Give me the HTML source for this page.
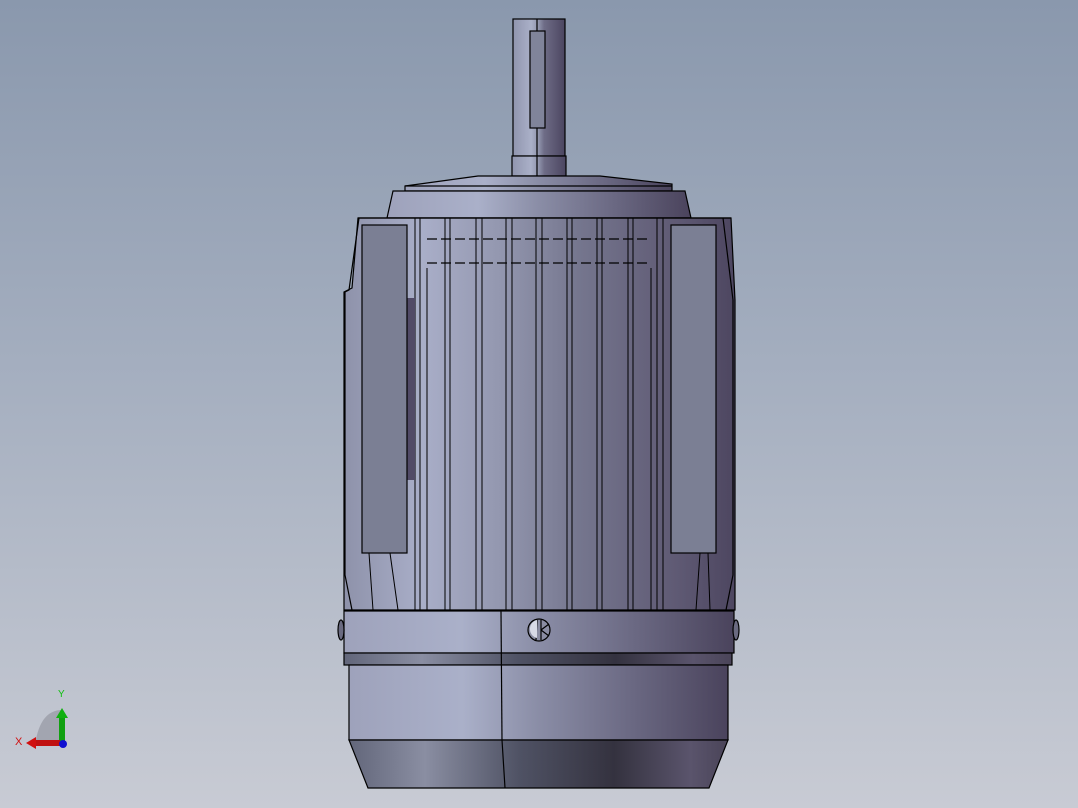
<!DOCTYPE html>
<html><head><meta charset="utf-8"><style>
html,body{margin:0;padding:0;width:1078px;height:808px;overflow:hidden}
body{background:linear-gradient(180deg,#8a98ad 0%,#a4aebf 45%,#c8cbd4 100%)}
svg{position:absolute;left:0;top:0}
</style></head><body>
<svg width="1078" height="808" viewBox="0 0 1078 808" xmlns="http://www.w3.org/2000/svg">
<defs>
<linearGradient id="g" x1="0" x2="1" y1="0" y2="0">
<stop offset="0" stop-color="#8e92aa"/><stop offset="0.2" stop-color="#a9aec8"/><stop offset="0.4" stop-color="#9397af"/><stop offset="0.6" stop-color="#75768e"/><stop offset="0.85" stop-color="#5f5a74"/><stop offset="1" stop-color="#4d4660"/>
</linearGradient>
<linearGradient id="gb" x1="0" x2="1" y1="0" y2="0">
<stop offset="0" stop-color="#9ea2bb"/><stop offset="0.3" stop-color="#aab0c9"/><stop offset="0.5" stop-color="#8a8da6"/><stop offset="0.75" stop-color="#6a6882"/><stop offset="1" stop-color="#4a435c"/>
</linearGradient>
<linearGradient id="gd" x1="0" x2="1" y1="0" y2="0">
<stop offset="0" stop-color="#62667a"/><stop offset="0.2" stop-color="#8a8ea2"/><stop offset="0.45" stop-color="#4f5264"/><stop offset="0.7" stop-color="#34323f"/><stop offset="0.9" stop-color="#5a546c"/><stop offset="1" stop-color="#4a4458"/>
</linearGradient>
<linearGradient id="gs" x1="0" x2="1" y1="0" y2="0">
<stop offset="0" stop-color="#9095ae"/><stop offset="0.35" stop-color="#aab0c8"/><stop offset="0.5" stop-color="#8e92aa"/><stop offset="0.6" stop-color="#6e6c86"/><stop offset="1" stop-color="#4b4560"/>
</linearGradient>
</defs>
<g stroke="#000" stroke-width="1.2">
<!-- shaft -->
<rect x="513" y="19" width="52" height="137" fill="url(#gs)"/>
<rect x="512" y="156" width="54" height="20" fill="url(#gs)"/>
<line x1="537" y1="19" x2="537" y2="176"/>
<rect x="530" y="31" width="15" height="97" fill="#80849a"/>
<!-- top cap -->
<polygon points="405,186 478,176 600,176 672,184 672,191 405,191" fill="url(#gb)"/>
<line x1="405" y1="186" x2="672" y2="186"/>
<polygon points="393,191 685,191 691,218 387,218" fill="url(#gb)"/>
<!-- body -->
<polygon points="358,218 731,218 735,300 735,610 344,610 344,292 352,288" fill="url(#g)"/>
<g fill="none">
<line x1="358" y1="218" x2="731" y2="218"/>
<polyline points="359,218 349,290 345,292 345,575 352,610"/>
<polyline points="723,218 733,300 733,575 726,610"/>
<line x1="427" y1="239" x2="651" y2="239" stroke-dasharray="10 4"/>
<line x1="427" y1="263" x2="651" y2="263" stroke-dasharray="10 4"/>
</g>
<g fill="none" stroke-width="1">
<line x1="415" y1="218" x2="415" y2="610"/><line x1="420" y1="218" x2="420" y2="610"/>
<line x1="427" y1="268" x2="427" y2="610"/>
<line x1="445" y1="218" x2="445" y2="610"/><line x1="450" y1="218" x2="450" y2="610"/>
<line x1="476" y1="218" x2="476" y2="610"/><line x1="482" y1="218" x2="482" y2="610"/>
<line x1="506" y1="218" x2="506" y2="610"/><line x1="512" y1="218" x2="512" y2="610"/>
<line x1="536" y1="218" x2="536" y2="610"/><line x1="542" y1="218" x2="542" y2="610"/>
<line x1="567" y1="218" x2="567" y2="610"/><line x1="572" y1="218" x2="572" y2="610"/>
<line x1="597" y1="218" x2="597" y2="610"/><line x1="602" y1="218" x2="602" y2="610"/>
<line x1="628" y1="218" x2="628" y2="610"/><line x1="633" y1="218" x2="633" y2="610"/>
<line x1="651" y1="268" x2="651" y2="610"/>
<line x1="657" y1="218" x2="657" y2="610"/><line x1="663" y1="218" x2="663" y2="610"/>
<line x1="369" y1="553" x2="373" y2="610"/><line x1="390" y1="553" x2="398" y2="610"/>
<line x1="700" y1="553" x2="696" y2="610"/><line x1="708" y1="553" x2="710" y2="610"/>
<line x1="338" y1="0" x2="338" y2="0"/>
</g>
<rect x="407" y="298" width="8" height="182" fill="#514a67" stroke="none"/>
<rect x="362" y="225" width="45" height="328" fill="#7b7f94"/>
<rect x="671" y="225" width="45" height="328" fill="#7b7f94"/>
<!-- band -->
<rect x="344" y="611" width="390" height="42" fill="url(#gb)"/>
<rect x="344" y="653" width="388" height="12" fill="url(#gd)"/>
<rect x="349" y="665" width="379" height="75" fill="url(#gb)"/>
<polygon points="349,740 728,740 709,788 368,788" fill="url(#gd)"/>
<line x1="501" y1="611" x2="502" y2="740"/>
<line x1="502" y1="740" x2="505" y2="788"/>
<!-- screw -->
<circle cx="539" cy="630" r="11" fill="#8b8da3"/>
<path d="M537,620 L536,640 M541,620 L541,640 M541,630 L549,624 M541,630 L549,636" fill="none"/>
<path d="M530,628 a9,9 0 0 1 7,-8 l0,18 a9,9 0 0 1 -7,-10z" fill="#d8dae6" stroke="none"/>
<ellipse cx="341" cy="630" rx="3" ry="10" fill="#6a6a80"/>
<ellipse cx="736" cy="630" rx="3" ry="10" fill="#6a6a80"/>
</g>
<!-- triad -->
<path d="M35,745 Q40,710 62,710 L62,745 Z" fill="#9a9ca8" opacity="0.8"/>
<rect x="59" y="718" width="6" height="27" fill="#10a010"/>
<polygon points="56,718 68,718 62,708" fill="#10b010"/>
<rect x="36" y="740" width="24" height="6" fill="#c01010"/>
<polygon points="36,737 36,749 26,743" fill="#d01010"/>
<circle cx="63" cy="744" r="4" fill="#1010d0"/>
<text x="58" y="697" font-family="Liberation Sans,sans-serif" font-size="10" fill="#10c010">Y</text>
<text x="15" y="745" font-family="Liberation Sans,sans-serif" font-size="11" fill="#d01010">X</text>
</svg>
</body></html>
